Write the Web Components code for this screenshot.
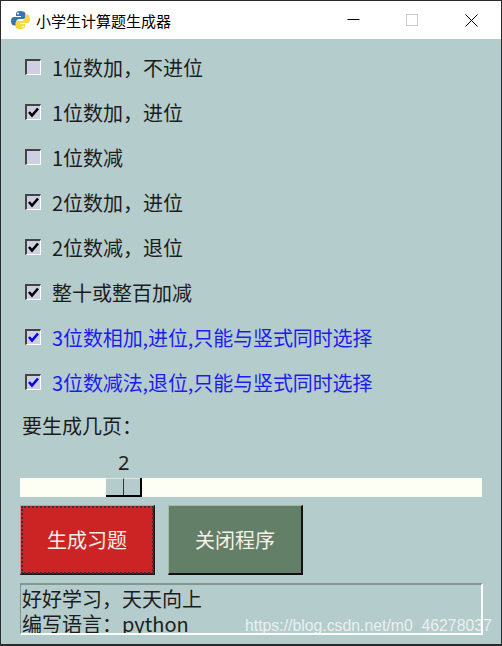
<!DOCTYPE html>
<html lang="zh">
<head>
<meta charset="utf-8">
<title>小学生计算题生成器</title>
<style>
  html, body { margin: 0; padding: 0; background: #b5cccc; }
  body { font-family: "Noto Sans CJK SC", "Liberation Sans", sans-serif; }
</style>
</head>
<body>
<app-window>
  <title-bar slot="title">小学生计算题生成器</title-bar>
  <check-row>1位数加，不进位</check-row>
  <check-row checked>1位数加，进位</check-row>
  <check-row>1位数减</check-row>
  <check-row checked>2位数加，进位</check-row>
  <check-row checked>2位数减，退位</check-row>
  <check-row checked>整十或整百加减</check-row>
  <check-row checked blue>3位数相加,进位,只能与竖式同时选择</check-row>
  <check-row checked blue>3位数减法,退位,只能与竖式同时选择</check-row>
  <page-scale label="要生成几页：" value="2"></page-scale>
  <button-bar>
    <tk-button color="#cc2424" focused>生成习题</tk-button>
    <tk-button color="#647f67">关闭程序</tk-button>
  </button-bar>
  <info-box>
    <div>好好学习，天天向上</div>
    <div>编写语言：python</div>
  </info-box>
</app-window>

<script>
class AppWindow extends HTMLElement {
  constructor() {
    super();
    this.attachShadow({ mode: 'open' }).innerHTML = `
      <style>
        :host {
          display: flex;
          flex-direction: column;
          box-sizing: border-box;
          position: relative;
          width: 502px;
          height: 646px;
          overflow: hidden;
          background: #b5cccc;
          border: 1px solid #2b2b2b;
          border-bottom-width: 2px;
        }
        #body { display: flex; flex-direction: column; padding-top: 6px; min-height: 0; }
        #mark {
          position: absolute;
          left: 244px;
          top: 615px;
          font: 15.8px/20px "Liberation Sans", Arial, sans-serif;
          color: rgba(255, 255, 255, 0.72);
          white-space: nowrap;
        }
      </style>
      <slot name="title"></slot>
      <div id="body"><slot></slot></div>
      <div id="mark">https://blog.csdn.net/m0_46278037</div>
    `;
  }
}

class TitleBar extends HTMLElement {
  constructor() {
    super();
    this.attachShadow({ mode: 'open' }).innerHTML = `
      <style>
        :host {
          display: flex;
          align-items: center;
          height: 38px;
          flex: none;
          background: #fff;
          color: #000;
          font: 15px "Noto Sans CJK SC", sans-serif;
        }
        #logo { margin-left: 10px; margin-right: 6px; flex: none; }
        #text { flex: 1; white-space: nowrap; padding-top: 1px; }
        #controls { display: flex; flex: none; }
        #controls svg { display: block; width: 59px; height: 38px; }
      </style>
      <svg id="logo" width="19" height="20" viewBox="0 0 19 20">
        <path fill="#3a75a8" d="M9 1C6 1 5 2 5 4v2h5v1H3C1 7 0 8.500 0 11s1 4.500 3 4.500h2v-3c0-2 1.500-3.500 3.500-3.500h4c1.200 0 2-.8 2-2V4c0-2-2-3-5.500-3z"/>
        <path fill="#fbd63f" d="M10 19c3 0 4-1 4-3v-2H9v-1h7c2 0 3-1.500 3-4s-1-4.500-3-4.500h-2v3c0 2-1.500 3.500-3.500 3.500h-4c-1.200 0-2 .8-2 2v3.500c0 2 2 2.500 5.500 2.500z"/>
        <circle cx="7" cy="3.500" r="1" fill="#fff"/>
        <circle cx="12" cy="16.500" r="1" fill="#fff"/>
      </svg>
      <span id="text"><slot></slot></span>
      <div id="controls">
        <svg viewBox="0 0 59 38"><path d="M23.500 18.500h12" stroke="#000" fill="none"/></svg>
        <svg viewBox="0 0 59 38"><rect x="23.500" y="13.500" width="11" height="11" stroke="#ccc" fill="none"/></svg>
        <svg viewBox="0 0 59 38"><path d="M23.500 13.500l12 12M35.500 13.500l-12 12" stroke="#000" fill="none"/></svg>
      </div>
    `;
  }
}

class CheckRow extends HTMLElement {
  constructor() {
    super();
    this.attachShadow({ mode: 'open' }).innerHTML = `
      <style>
        :host {
          display: flex;
          align-items: center;
          height: 45px;
          flex: none;
          padding-left: 24px;
          color: #1c1c1c;
          font: 20px/28px "Noto Sans CJK SC", sans-serif;
          white-space: nowrap;
        }
        :host([blue]) { color: #1c1cf0; letter-spacing: -0.1px; }
        #box {
          box-sizing: border-box;
          flex: none;
          width: 16px;
          height: 16px;
          margin: -1px 11px 0 0;
          background: #cfcfe3;
          border-style: solid;
          border-width: 2px 1px 1px 2px;
          border-color: #444 #fff #fff #444;
          display: flex;
        }
        svg { display: none; width: 13px; height: 13px; }
        :host([checked]) svg { display: block; }
        path { stroke: #000; }
        :host([blue]) path { stroke: #0000ff; }
      </style>
      <span id="box"><svg viewBox="0 0 13 13"><path d="M2 6l3 3.500L11 2.500" fill="none" stroke-width="2.600"/></svg></span>
      <span><slot></slot></span>
    `;
  }
}

class PageScale extends HTMLElement {
  constructor() {
    super();
    this.attachShadow({ mode: 'open' }).innerHTML = `
      <style>
        :host {
          display: flex;
          flex-direction: column;
          flex: none;
          color: #1c1c1c;
          font: 20px/28px "Noto Sans CJK SC", sans-serif;
        }
        #label { padding: 7px 0 0 21px; height: 35px; box-sizing: border-box; }
        #value { height: 38px; padding-left: 117px; padding-top: 9px; box-sizing: border-box; line-height: 28px; font-size: 20px; font-family: "Noto Sans", sans-serif; }
        #trough {
          display: flex;
          height: 19px;
          margin: 0 19px;
          padding-left: 86px;
          background: #fdfff5;
        }
        #handle { display: flex; width: 36px; height: 19px; box-sizing: border-box; border-right: 2px solid #000; border-bottom: 2px solid #000; }
        #handle span { flex: 1; background: #b5cccc; border-top: 1px solid #d9e6e3; }
        #handle span + span { border-left: 1px solid #333; }
      </style>
      <div id="label"></div>
      <div id="value"></div>
      <div id="trough"><div id="handle"><span></span><span></span></div></div>
    `;
  }
  connectedCallback() {
    this.shadowRoot.querySelector('#label').textContent = this.getAttribute('label');
    this.shadowRoot.querySelector('#value').textContent = this.getAttribute('value');
  }
}

class ButtonBar extends HTMLElement {
  constructor() {
    super();
    this.attachShadow({ mode: 'open' }).innerHTML = `
      <style>
        :host { display: flex; flex: none; gap: 13px; padding: 8px 0 0 19px; }
      </style>
      <slot></slot>
    `;
  }
}

class TkButton extends HTMLElement {
  constructor() {
    super();
    this.attachShadow({ mode: 'open' }).innerHTML = `
      <style>
        :host {
          display: flex;
          align-items: center;
          justify-content: center;
          box-sizing: border-box;
          width: 135px;
          height: 70px;
          color: #f4f0ea;
          font: 20px/28px "Noto Sans CJK SC", sans-serif;
          background: var(--bg);
          border-style: solid;
          border-width: 1px 2px 2px 1px;
          border-color: #a9b9a9 #111 #111 #a9b9a9;
        }
        :host([focused]) {
          border-color: #f08a8a #1a1a1a #1a1a1a #f08a8a;
          outline: 2px dotted #333;
          outline-offset: -3px;
        }
      </style>
      <slot></slot>
    `;
  }
  connectedCallback() {
    this.style.setProperty('--bg', this.getAttribute('color'));
  }
}

class InfoBox extends HTMLElement {
  constructor() {
    super();
    this.attachShadow({ mode: 'open' }).innerHTML = `
      <style>
        :host {
          display: block;
          box-sizing: border-box;
          flex: none;
          width: 463px;
          height: 52px;
          margin: 8px 0 0 19px;
          padding: 1px 0 0 1px;
          overflow: hidden;
          color: #1c1c1c;
          font: 20px/25px "Noto Sans CJK SC", sans-serif;
          white-space: nowrap;
          border-style: solid;
          border-width: 2px 2px 2px 1px;
          border-color: #83968f #fff #fff #83968f;
        }
      </style>
      <slot></slot>
    `;
  }
}

customElements.define('app-window', AppWindow);
customElements.define('title-bar', TitleBar);
customElements.define('check-row', CheckRow);
customElements.define('page-scale', PageScale);
customElements.define('button-bar', ButtonBar);
customElements.define('tk-button', TkButton);
customElements.define('info-box', InfoBox);
</script>
</body>
</html>
